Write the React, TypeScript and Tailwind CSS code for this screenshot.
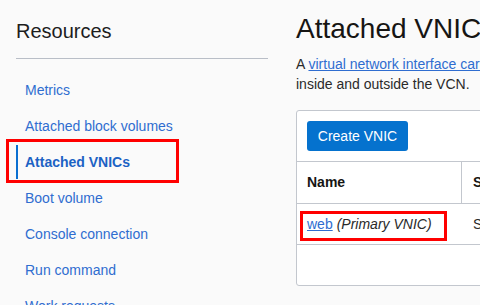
import React from "react";

const navItems = [
  "Metrics",
  "Attached block volumes",
  "Attached VNICs",
  "Boot volume",
  "Console connection",
  "Run command",
  "Work requests",
];

export default function App() {
  return (
    <div
      className="relative w-[480px] h-[305px] overflow-hidden bg-[#fafafa] flex"
      style={{ fontFamily: '"Liberation Sans", Arial, sans-serif' }}
    >
      {/* Sidebar */}
      <div className="w-[268px] shrink-0 pl-[16px]">
        <div className="pt-[19px] text-[20px] leading-[24px] text-[#1d1d1d]">Resources</div>
        <div className="mt-[15px] h-px bg-[#b9bec7]" />
        <nav className="mt-[14px] flex flex-col gap-[2px]">
          {navItems.map((item) => {
            const active = item === "Attached VNICs";
            return (
              <div
                key={item}
                className={
                  active
                    ? "h-[34px] flex items-center border-l-2 border-[#0a6fd1] pl-[7px] text-[14px] font-bold text-[#1c62c4]"
                    : "h-[34px] flex items-center border-l-2 border-transparent pl-[7px] text-[14px] text-[#2f6dd0]"
                }
              >
                {item}
              </div>
            );
          })}
        </nav>
      </div>

      {/* Main */}
      <div className="ml-[28px] w-[620px] shrink-0">
        <h1 className="pt-[13px] text-[28px] leading-[32px] text-[#161513]">Attached VNICs</h1>
        <p className="mt-[9px] text-[14px] leading-[20px] text-[#2a2a2a] whitespace-nowrap">
          A{" "}
          <span className="text-[#2f6dd0] underline">virtual network interface card (VNIC)</span>{" "}
          enables an instance to connect to a VCN and communicate with hosts
          <br />
          inside and outside the VCN.
        </p>
        <div className="mt-[16px] h-[176px] w-[600px] border border-[#c3c7ce] rounded-[3px] bg-white">
          <div className="p-[10px]">
            <button className="h-[30px] w-[101px] rounded-[3px] bg-[#0572ce] text-white text-[14px]">
              Create VNIC
            </button>
          </div>
          <div className="border-t border-[#c3c7ce]">
            <div className="flex h-[42px] border-b border-[#c3c7ce]">
              <div className="w-[165px] border-r border-[#c3c7ce] pl-[10px] flex items-center text-[14px] font-bold text-[#161513]">
                Name
              </div>
              <div className="pl-[11px] flex items-center text-[14px] font-bold text-[#161513]">
                State
              </div>
            </div>
            <div className="flex h-[41px] border-b border-[#c3c7ce]">
              <div className="w-[165px] pl-[10px] flex items-center text-[14px] text-[#2a2a2a]">
                <span className="text-[#2f6dd0] underline">web</span>
                <span className="italic ml-[4px]">(Primary VNIC)</span>
              </div>
              <div className="pl-[11px] flex items-center text-[14px] text-[#2a2a2a]">
                Subnet
              </div>
            </div>
          </div>
        </div>
      </div>

      {/* Red annotation boxes */}
      <div className="absolute left-[6px] top-[139px] w-[173px] h-[44px] border-[3px] border-[#ff0000]" />
      <div className="absolute left-[300px] top-[211px] w-[147px] h-[30px] border-[3px] border-[#ff0000]" />
    </div>
  );
}
